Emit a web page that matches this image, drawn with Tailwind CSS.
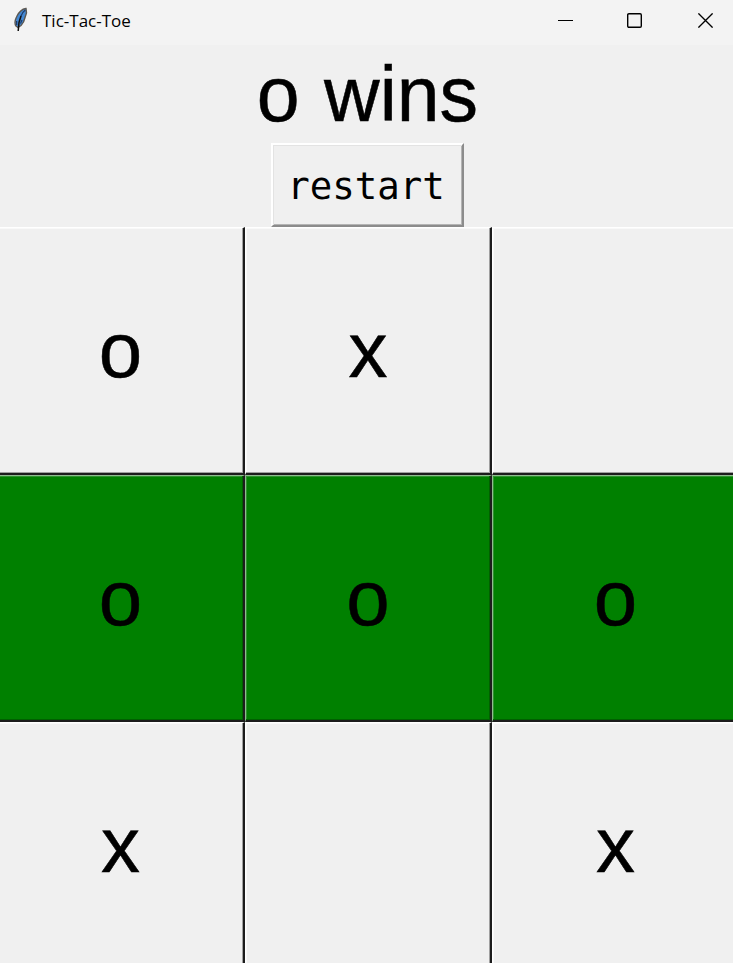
<!DOCTYPE html>
<html lang="en">
<head>
<meta charset="utf-8">
<title>Tic-Tac-Toe</title>
<script src="https://cdn.jsdelivr.net/npm/@tailwindcss/browser@4"></script>
</head>
<body class="w-[733px] h-[963px] overflow-hidden bg-[#f0f0f0] text-black flex flex-col font-['Liberation_Sans',Arial,sans-serif]">
<header class="h-[45px] shrink-0 bg-[#f3f3f3] flex items-start">
  <svg class="mt-[7px] ml-[13px] w-4 h-[25px]" viewBox="0 0 16 25" fill="none">
    <path d="M13 1.500C9 2 5.500 5.500 3.500 10C1.800 13.500 1.700 17 3 19L5 20.500L8 18.500C10.500 16 11.500 13 12 10.500L13.500 6Z" fill="#4388d4" stroke="#5c5852" stroke-width="1.400"/>
    <path d="M12.300 3C10 4.500 8.800 7 7.800 9.500M9 13L7.500 16.500M3.600 14L3.700 18" stroke="#1d3a66" stroke-width="1.200"/>
    <path d="M8 9L6 15.500L5.200 24" stroke="#101010" stroke-width="1.500"/>
  </svg>
  <div class="ml-[13px] mt-[9px] h-6 w-[400px] leading-6 text-[17px] font-['Open_Sans','Noto_Sans',sans-serif]">Tic-Tac-Toe</div>
  <svg class="ml-[116px] mt-[12px] w-[15px] h-4" viewBox="0 0 15 16"><path d="M0 8.500H15" stroke="#000"/></svg>
  <svg class="ml-[54px] mt-[13px] w-[15px] h-[15px]" viewBox="0 0 15 15" fill="none"><rect x=".7" y=".7" width="13.600" height="13.600" rx="1.200" stroke="#000" stroke-width="1.400"/></svg>
  <svg class="ml-[56px] mt-[13px] w-[15px] h-[15px]" viewBox="0 0 15 15"><path d="M.4 .4L14.600 14.600M14.600 .4L.4 14.600" stroke="#000" stroke-width="1.350"/></svg>
</header>
<section class="h-[182px] shrink-0 flex flex-col items-center">
  <h1 class="h-[98px] pt-[4px] pl-[2px] leading-[91px] text-[77px] whitespace-pre [word-spacing:3px] [-webkit-text-stroke:0.5px_#000]">o wins</h1>
  <button class="w-[193px] h-[84px] ml-[2px] border-2 border-t-white border-l-white border-r-[#8c8c8c] border-b-[#8c8c8c] text-[37.400px] leading-[80px] pt-[2px] pr-[3px] font-['DejaVu_Sans_Mono',monospace] flex items-center justify-center shadow-[inset_1px_1px_0_#e3e3e3,inset_-1px_-1px_0_#b4b4b4]">restart</button>
</section>
<main class="ml-[-3px] w-[743px] shrink-0 grid grid-cols-[248px_247px_248px] grid-rows-[248px_247px_248px] text-[78px] leading-[80px] [-webkit-text-stroke:0.5px_#000] [&>div]:flex [&>div]:items-center [&>div]:justify-center [&>div]:border-t [&>div]:border-l [&>div]:border-r-2 [&>div]:border-b-2 [&>div]:border-r-[#1c1c1c] [&>div]:border-b-[#1c1c1c] [&>div]:pb-px">
  <div class="border-white shadow-[inset_-1px_-1px_0_#a0a0a0,inset_1px_1px_0_#f9f9f9]">o</div>
  <div class="border-white shadow-[inset_-1px_-1px_0_#a0a0a0,inset_1px_1px_0_#f9f9f9]">x</div>
  <div class="border-white shadow-[inset_-1px_-1px_0_#a0a0a0,inset_1px_1px_0_#f9f9f9]"></div>
  <div class="bg-[#008000] border-t-[#8fbc8f] border-l-[#8fbc8f] shadow-[inset_-1px_-1px_0_#006000,inset_1px_1px_0_#2f922f]">o</div>
  <div class="bg-[#008000] border-t-[#8fbc8f] border-l-[#8fbc8f] shadow-[inset_-1px_-1px_0_#006000,inset_1px_1px_0_#2f922f]">o</div>
  <div class="bg-[#008000] border-t-[#8fbc8f] border-l-[#8fbc8f] shadow-[inset_-1px_-1px_0_#006000,inset_1px_1px_0_#2f922f]">o</div>
  <div class="border-white shadow-[inset_-1px_-1px_0_#a0a0a0,inset_1px_1px_0_#f9f9f9]">x</div>
  <div class="border-white shadow-[inset_-1px_-1px_0_#a0a0a0,inset_1px_1px_0_#f9f9f9]"></div>
  <div class="border-white shadow-[inset_-1px_-1px_0_#a0a0a0,inset_1px_1px_0_#f9f9f9]">x</div>
</main>
</body>
</html>
